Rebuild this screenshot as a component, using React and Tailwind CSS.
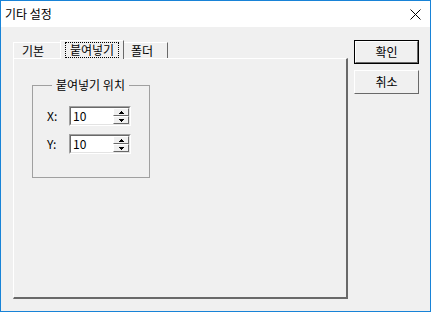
import React from 'react';

const font = { fontFamily: '"Noto Sans CJK KR", "Noto Sans", sans-serif' };

function SpinEdit({ value }) {
  return (
    <div className="flex h-[20px] w-[62px] border-t border-l border-[#a0a0a0] border-r border-b border-r-white border-b-white">
      <div className="flex flex-1 border-t border-l border-[#696969] border-r border-b border-r-[#e3e3e3] border-b-[#e3e3e3] bg-white">
        <span className="flex-1 pl-[2px] text-[12px] leading-[16px] text-black">{value}</span>
        <div className="flex w-[16px] flex-col">
          <div className="flex h-[8px] items-center justify-center border-t border-l border-white border-r border-b border-r-[#696969] border-b-[#696969] bg-[#f0f0f0]">
            <svg width="5" height="3" viewBox="0 0 5 3"><path d="M2 0h1v1h1v1h1v1H0V2h1V1h1z" fill="#000" /></svg>
          </div>
          <div className="flex h-[8px] items-center justify-center border-t border-l border-white border-r border-b border-r-[#696969] border-b-[#696969] bg-[#f0f0f0]">
            <svg width="5" height="3" viewBox="0 0 5 3"><path d="M0 0h5v1H4v1H3v1H2V2H1V1H0z" fill="#000" /></svg>
          </div>
        </div>
      </div>
    </div>
  );
}

function Tab({ label, selected }) {
  if (selected) {
    return (
      <div className="relative z-10 -mx-[2px] flex h-[19px] w-[64px] items-start justify-center border-t border-l border-white border-r border-r-[#696969] bg-[#f0f0f0] pt-[1px]">
        <span className="border border-dotted border-black px-[4px] text-[12px] leading-[14px]">{label}</span>
      </div>
    );
  }
  return (
    <div className="flex h-[17px] items-start border-t border-l border-white border-r border-r-[#696969] bg-[#f0f0f0] pl-[8px]" style={{ width: label === '기본' ? 49 : 46 }}>
      <span className="text-[12px] leading-[15px]">{label}</span>
    </div>
  );
}

export default function App() {
  return (
    <div className="flex h-[312px] w-[431px] flex-col border border-[#1883d7] bg-[#f0f0f0] text-black" style={font}>
      {/* title bar */}
      <div className="flex h-[26px] items-center justify-between bg-white pl-[4px] pr-[9px]">
        <span className="text-[12px] leading-none">기타 설정</span>
        <svg width="11" height="11" viewBox="0 0 11 11" className="mt-[1px]">
          <path d="M0.5 0.5l10 10M10.5 0.5l-10 10" stroke="#000" strokeWidth="1" />
        </svg>
      </div>

      {/* body */}
      <div className="flex flex-1 gap-[6px] pl-[12px] pt-[13px]">
        {/* tab control */}
        <div className="flex w-[335px] flex-col">
          <div className="flex h-[19px] items-end">
            <Tab label="기본" />
            <Tab label="붙여넣기" selected />
            <Tab label="폴더" />
          </div>
          <div className="-mt-[1px] h-[241px] border-t border-l border-white border-r-2 border-b-2 border-r-[#696969] border-b-[#696969] pl-[18px] pt-[19px]">
            <fieldset className="h-[100px] w-[118px] border border-[#a0a0a0] pl-[14px]">
              <legend className="ml-[5px] px-[4px] text-[12px] leading-[14px]">붙여넣기 위치</legend>
              <div className="mt-[14px] flex flex-col gap-[8px]">
                <div className="flex items-center gap-[7px]">
                  <span className="w-[15px] text-[12px]">X:</span>
                  <SpinEdit value="10" />
                </div>
                <div className="flex items-center gap-[7px]">
                  <span className="w-[15px] text-[12px]">Y:</span>
                  <SpinEdit value="10" />
                </div>
              </div>
            </fieldset>
          </div>
        </div>

        {/* buttons */}
        <div className="flex flex-col gap-[6px]">
          <div className="h-[24px] w-[65px] border border-black">
            <div className="flex h-full items-center justify-center border-t border-l border-white border-r border-b border-r-[#696969] border-b-[#696969] text-[12px]">확인</div>
          </div>
          <div className="flex h-[24px] w-[65px] items-center justify-center border-t border-l border-white border-r border-b border-r-[#696969] border-b-[#696969] text-[12px]">취소</div>
        </div>
      </div>
    </div>
  );
}
